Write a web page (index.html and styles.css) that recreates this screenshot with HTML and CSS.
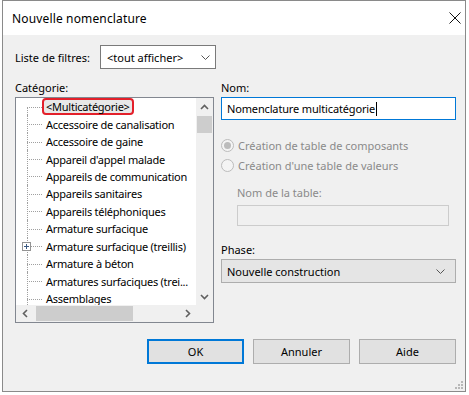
FILE: index.html
```html
<!DOCTYPE html>
<html lang="fr">
<head>
    <meta charset="UTF-8">
    <title>Nouvelle nomenclature</title>
    <link rel="stylesheet" href="styles.css">
</head>
<body>
    <div class="window">
        <div class="titlebar">
            <span class="title">Nouvelle nomenclature</span>
            <svg class="close" width="12" height="12" viewBox="0 0 12 12">
                <path d="M0.5 0.5 L11.5 11.5 M11.5 0.5 L0.5 11.5" stroke="#111" stroke-width="1" fill="none"/>
            </svg>
        </div>
        <div class="dialog">
            <div class="filter-row">
                <span class="filter-label">Liste de filtres:</span>
                <div class="combo">
                    <span>&lt;tout afficher&gt;</span>
                    <svg width="9" height="5" viewBox="0 0 9 5"><polyline points="0.5,0.5 4.5,4.5 8.5,0.5" stroke="#555" fill="none"/></svg>
                </div>
            </div>

            <div class="main">
                <div class="left">
                    <div class="label">Catégorie:</div>
                    <div class="tree">
                        <div class="tree-top">
                            <div class="tree-items">
                                <div class="row first"><span class="item selected">&lt;Multicatégorie&gt;</span></div>
                                <div class="row"><span class="item">Accessoire de canalisation</span></div>
                                <div class="row"><span class="item">Accessoire de gaine</span></div>
                                <div class="row"><span class="item">Appareil d'appel malade</span></div>
                                <div class="row"><span class="item">Appareils de communication</span></div>
                                <div class="row"><span class="item">Appareils sanitaires</span></div>
                                <div class="row"><span class="item">Appareils téléphoniques</span></div>
                                <div class="row"><span class="item">Armature surfacique</span></div>
                                <div class="row"><span class="plus"></span><span class="item">Armature surfacique (treillis)</span></div>
                                <div class="row"><span class="item">Armature à béton</span></div>
                                <div class="row"><span class="item">Armatures surfaciques (trei...</span></div>
                                <div class="row"><span class="item">Assemblages</span></div>
                            </div>
                            <div class="vscroll">
                                <div class="sbtn"><svg width="9" height="6" viewBox="0 0 9 6"><polyline points="1,5 4.5,1.5 8,5" stroke="#606060" stroke-width="1.6" fill="none"/></svg></div>
                                <div class="vthumb"></div>
                                <div class="vtrack"></div>
                                <div class="sbtn"><svg width="9" height="6" viewBox="0 0 9 6"><polyline points="1,1 4.5,4.5 8,1" stroke="#606060" stroke-width="1.6" fill="none"/></svg></div>
                            </div>
                        </div>
                        <div class="hscroll">
                            <div class="sbtn"><svg width="6" height="9" viewBox="0 0 6 9"><polyline points="5,1 1.5,4.5 5,8" stroke="#606060" stroke-width="1.6" fill="none"/></svg></div>
                            <div class="hthumb"></div>
                            <div class="htrack"></div>
                            <div class="sbtn"><svg width="6" height="9" viewBox="0 0 6 9"><polyline points="1,1 4.5,4.5 1,8" stroke="#606060" stroke-width="1.6" fill="none"/></svg></div>
                            <div class="corner"></div>
                        </div>
                    </div>
                </div>

                <div class="right">
                    <div class="label">Nom:</div>
                    <div class="textbox focused"><span class="typed">Nomenclature multicatégorie</span><span class="caret"></span></div>

                    <div class="radio-row first-radio">
                        <span class="radio checked"></span>
                        <span class="disabled">Création de table de composants</span>
                    </div>
                    <div class="radio-row">
                        <span class="radio"></span>
                        <span class="disabled">Création d'une table de valeurs</span>
                    </div>

                    <div class="sub">
                        <div class="label disabled">Nom de la table:</div>
                        <div class="textbox off"></div>
                    </div>

                    <div class="label phase-label">Phase:</div>
                    <div class="select">
                        <span>Nouvelle construction</span>
                        <svg width="9" height="5" viewBox="0 0 9 5"><polyline points="0.5,0.5 4.5,4.5 8.5,0.5" stroke="#555" fill="none"/></svg>
                    </div>
                </div>
            </div>

            <div class="buttons">
                <div class="btn default">OK</div>
                <div class="btn">Annuler</div>
                <div class="btn">Aide</div>
            </div>

            <svg class="grip" width="8" height="8" viewBox="0 0 8 8">
                <rect x="6" y="0" width="2" height="2" fill="#b8b8b8"/>
                <rect x="3" y="3" width="2" height="2" fill="#b8b8b8"/>
                <rect x="6" y="3" width="2" height="2" fill="#b8b8b8"/>
                <rect x="0" y="6" width="2" height="2" fill="#b8b8b8"/>
                <rect x="3" y="6" width="2" height="2" fill="#b8b8b8"/>
                <rect x="6" y="6" width="2" height="2" fill="#b8b8b8"/>
            </svg>
        </div>
    </div>
</body>
</html>
```

FILE: styles.css
```css
body {
    margin: 0;
    background: #ffffff;
    font-family: 'Noto Sans', 'Liberation Sans', sans-serif;
    font-size: 11px;
    color: #000000;
}
.window {
    margin-left: 2px;
    width: 464px;
    height: 392px;
    box-sizing: border-box;
    border: 1px solid #8a8a8a;
    display: flex;
    flex-direction: column;
}
.titlebar {
    height: 34px;
    background: #ffffff;
    display: flex;
    align-items: center;
    justify-content: space-between;
    padding: 0 4px 0 9px;
    flex-shrink: 0;
}
.title {
    font-size: 12px;
    letter-spacing: 0.15px;
}
.dialog {
    position: relative;
    flex: 1;
    background: #f0f0f0;
    padding: 10px 0 0 12px;
}
.filter-row {
    display: flex;
    align-items: center;
    height: 24px;
}
.filter-label {
    width: 86px;
    margin-left: -1px;
    padding-left: 1px;
    box-sizing: border-box;
}
.combo {
    width: 116px;
    height: 24px;
    box-sizing: border-box;
    border: 1px solid #7a7a7a;
    background: #ffffff;
    display: flex;
    align-items: center;
    justify-content: space-between;
    padding: 0 5px 0 6px;
}
.main {
    display: flex;
    gap: 7px;
    margin-top: 11px;
}
.label {
    height: 16px;
    line-height: 16px;
    margin-bottom: 1px;
}
.left {
    width: 199px;
}
.tree {
    width: 199px;
    height: 226px;
    box-sizing: border-box;
    border: 1px solid #828790;
    background: #ffffff;
    display: flex;
    flex-direction: column;
}
.tree-top {
    display: flex;
    height: 207px;
}
.tree-items {
    width: 180px;
    overflow: hidden;
}
.row {
    position: relative;
    height: 17.45px;
    display: flex;
    align-items: center;
    padding-left: 26px;
    white-space: nowrap;
    letter-spacing: -0.25px;
}
.row::before {
    content: '';
    position: absolute;
    left: 11px;
    width: 15px;
    top: 50%;
    border-top: 1px dotted #a0a0a0;
}
.row::after {
    content: '';
    position: absolute;
    left: 11px;
    top: 0;
    bottom: 0;
    border-left: 1px dotted #a0a0a0;
}
.row.first::after {
    top: 50%;
}
.item {
    display: inline-block;
    height: 17px;
    line-height: 13px;
    box-sizing: border-box;
    border: 2px solid transparent;
    padding: 0 2px;
    flex-shrink: 0;
}
.item.selected {
    border-color: #e3202a;
    border-radius: 4px;
    background: #e8e8e8;
}
.plus {
    position: absolute;
    left: 6px;
    top: 4px;
    width: 9px;
    height: 9px;
    box-sizing: border-box;
    border: 1px solid #949494;
    background: #ffffff linear-gradient(#3b5a82, #3b5a82) center / 5px 1px no-repeat;
    z-index: 1;
}
.plus::after {
    content: '';
    position: absolute;
    left: 3px;
    top: 1px;
    width: 1px;
    height: 5px;
    background: #3b5a82;
}
.vscroll {
    width: 17px;
    display: flex;
    flex-direction: column;
    background: #f0f0f0;
}
.sbtn {
    width: 17px;
    height: 17px;
    display: flex;
    align-items: center;
    justify-content: center;
    flex-shrink: 0;
}
.vthumb {
    height: 17px;
    margin: 1px 1px 0;
    background: #cdcdcd;
}
.vtrack {
    flex: 1;
}
.hscroll {
    height: 17px;
    display: flex;
    background: #f0f0f0;
}
.hthumb {
    width: 97px;
    margin: 1px 0 1px 3px;
    background: #cdcdcd;
}
.htrack {
    flex: 1;
}
.corner {
    width: 17px;
    background: #f0f0f0;
}
.right {
    width: 235px;
}
.textbox {
    height: 23px;
    box-sizing: border-box;
    border: 1px solid #7a7a7a;
    background: #ffffff;
    display: flex;
    align-items: center;
    padding-left: 5px;
}
.textbox.focused {
    border-color: #0078d7;
}
.typed {
    letter-spacing: -0.15px;
}
.caret {
    display: inline-block;
    width: 1px;
    height: 14px;
    background: #000000;
    margin-left: 1px;
}
.radio-row {
    display: flex;
    align-items: center;
    height: 20px;
    gap: 4px;
}
.first-radio {
    margin-top: 15px;
}
.radio {
    width: 13px;
    height: 13px;
    box-sizing: border-box;
    border: 1px solid #bcbcbc;
    border-radius: 50%;
    background: #f4f4f4;
    position: relative;
}
.radio.checked::after {
    content: '';
    position: absolute;
    left: 2px;
    top: 2px;
    width: 7px;
    height: 7px;
    border-radius: 50%;
    background: #bcbcbc;
}
.disabled {
    color: #8a8a8a;
}
.sub {
    margin: 10px 7px 0 16px;
}
.sub .label {
    margin-bottom: 4px;
}
.textbox.off {
    height: 21px;
    border-color: #cccccc;
    background: #f0f0f0;
}
.phase-label {
    margin-top: 16px;
    margin-bottom: 1px;
}
.select {
    height: 24px;
    box-sizing: border-box;
    border: 1px solid #adadad;
    background: #e5e5e5;
    display: flex;
    align-items: center;
    justify-content: space-between;
    padding: 0 10px 0 5px;
}
.buttons {
    display: flex;
    justify-content: flex-end;
    gap: 9px;
    margin-top: 16px;
    padding-right: 9px;
}
.btn {
    width: 97px;
    height: 25px;
    box-sizing: border-box;
    border: 1px solid #adadad;
    background: #e1e1e1;
    display: flex;
    align-items: center;
    justify-content: center;
}
.btn.default {
    border: 2px solid #0078d7;
}
.grip {
    position: absolute;
    right: 2px;
    bottom: 2px;
}
```
